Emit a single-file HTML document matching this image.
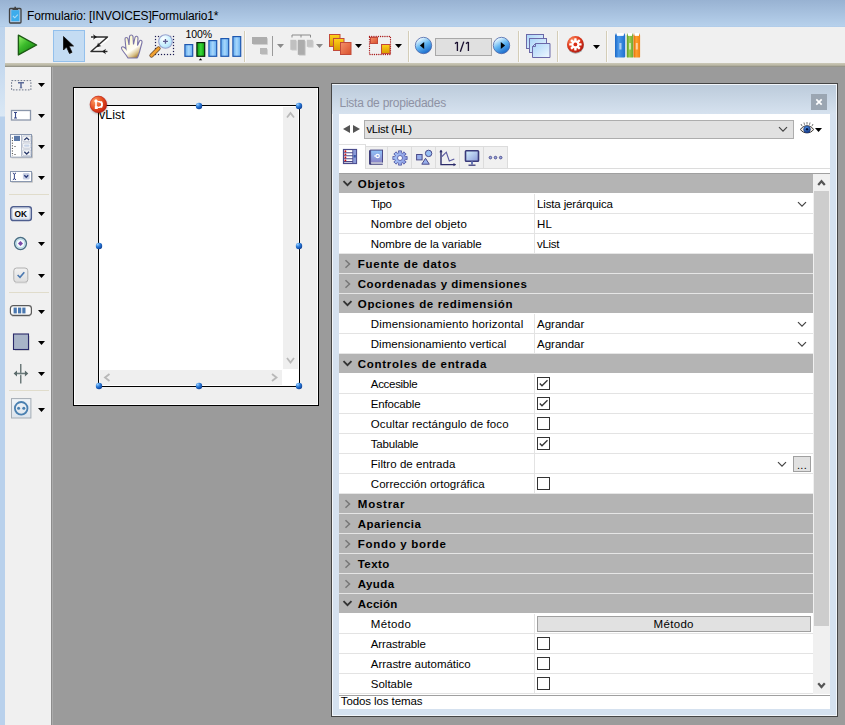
<!DOCTYPE html>
<html><head><meta charset="utf-8"><style>
html,body{margin:0;padding:0;}
body{width:845px;height:725px;overflow:hidden;position:relative;background:#9b9b9b;font-family:"Liberation Sans",sans-serif;}
body>div{position:absolute;}
.t{white-space:nowrap;line-height:20px;height:20px;}
svg{overflow:visible}
</style></head><body>
<div style="left:0px;top:0px;width:845px;height:27px;background:linear-gradient(#98b2d2,#b6d0eb 95%,#afcbe9);"></div>
<svg style="position:absolute;left:8px;top:6px" width="15" height="18" viewBox="0 0 15 18"><rect x="1.5" y="2.5" width="11.5" height="14.5" rx="1" fill="none" stroke="#404040" stroke-width="1.3"/><rect x="3.3" y="4.2" width="8" height="11" fill="#3cacec"/><path d="M4.5 3.3 H10 M7.2 0.8 V3.3" stroke="#404040" stroke-width="1.6"/><path d="M5 10 l1.8 1.8 l3-3.2" stroke="#a8daf6" stroke-width="1.1" fill="none"/></svg>
<div class="t" style="left:27px;top:6.24px;font-size:12px;font-weight:normal;color:#000;letter-spacing:-0.158px;">Formulario: [INVOICES]Formulario1*</div>
<div style="left:5px;top:27px;width:840px;height:36px;background:#f0f0f0;"></div>
<div style="left:5px;top:63px;width:840px;height:4px;background:linear-gradient(#cbc8b8,#bdbaa6 50%,#a8a698 75%,#86867c);"></div>
<div style="left:0px;top:27px;width:5px;height:698px;background:linear-gradient(#bcd3ec 0px,#c4d8ee 36px,#dae8f5 89px,#b9d1ec 90px,#b9d1ec);"></div>
<svg style="position:absolute;left:16px;top:33px" width="23" height="25" viewBox="0 0 23 25"><defs><linearGradient id="gp" x1="0" y1="0" x2="0.8" y2="1"><stop offset="0" stop-color="#9ef86e"/><stop offset="0.45" stop-color="#3cbc2c"/><stop offset="1" stop-color="#127a0e"/></linearGradient></defs><path d="M2.4 2.2 L20.6 12 L2.4 21.9 Z" fill="url(#gp)" stroke="#1c5a14" stroke-width="1.4" stroke-linejoin="round"/></svg>
<div style="left:53px;top:30px;width:32px;height:32px;background:#c4dcf3;box-sizing:border-box;border:1px solid #93c0ec;"></div>
<svg style="position:absolute;left:60px;top:35px" width="16" height="22" viewBox="0 0 16 22"><path d="M4 2 L4 15.5 L7 12.5 L10 19 L12.5 17.8 L9.5 11.5 L14 11.5 Z" fill="#c8c8c8" opacity="0.6"/><path d="M3.5 1.5 L3.5 15 L6.5 12 L9.5 18.5 L12 17.3 L9 11 L13.5 11 Z" fill="#000" stroke="#111" stroke-width="0.8" stroke-linejoin="round"/></svg>
<svg style="position:absolute;left:88px;top:33px" width="23" height="23" viewBox="0 0 23 23"><g stroke="#fff" stroke-width="3" fill="none" opacity="0.9" stroke-linejoin="round"><path d="M3.5 5 H20 L3.5 19 H20"/></g><g stroke="#2e2e2e" stroke-width="1.5" fill="none" stroke-linejoin="round"><path d="M3 4 H19.5 L3 18.5 H19.5"/></g><g fill="#1a1a1a"><path d="M5 1.3 L9 4 L5 6.7 L6.2 4 Z"/><path d="M14 18.5 L18 15.8 L16.8 18.5 L18 21.2 Z"/><path d="M9 14.2 L10 9.6 L11.2 11.9 L13.4 13 Z"/></g></svg>
<svg style="position:absolute;left:120px;top:34px" width="24" height="25" viewBox="0 0 24 25"><defs><linearGradient id="gh" x1="0.25" y1="0.2" x2="0.75" y2="1"><stop offset="0" stop-color="#fbf8d0"/><stop offset="0.55" stop-color="#fffef6"/><stop offset="0.8" stop-color="#d8c088"/><stop offset="1" stop-color="#9a6e20"/></linearGradient></defs><path d="M6 21 C3 17 1 15 1.5 13.5 C2.5 12 4.5 13 6 15 L5 5 C5 3 7.5 3 8 5 L9 11 L9.5 2.5 C10 0.5 12.5 0.5 13 2.5 L13.5 10.5 L15 3.5 C15.5 1.5 18 2 18 4 L17.5 11.5 L19.5 7 C20.5 5.5 22.5 6.5 22 8.5 L20 16 C19 20 18 23 17 24 L8 24 Z" fill="url(#gh)" stroke="#7a74a8" stroke-width="1.1"/></svg>
<svg style="position:absolute;left:149px;top:33px" width="27" height="26" viewBox="0 0 27 26"><rect x="5.9" y="2.9" width="1.2" height="1.2" fill="#1a1a50"/><rect x="5.9" y="20.9" width="1.2" height="1.2" fill="#1a1a50"/><rect x="8.9" y="2.9" width="1.2" height="1.2" fill="#1a1a50"/><rect x="8.9" y="20.9" width="1.2" height="1.2" fill="#1a1a50"/><rect x="11.9" y="2.9" width="1.2" height="1.2" fill="#1a1a50"/><rect x="11.9" y="20.9" width="1.2" height="1.2" fill="#1a1a50"/><rect x="14.9" y="2.9" width="1.2" height="1.2" fill="#1a1a50"/><rect x="14.9" y="20.9" width="1.2" height="1.2" fill="#1a1a50"/><rect x="17.9" y="2.9" width="1.2" height="1.2" fill="#1a1a50"/><rect x="17.9" y="20.9" width="1.2" height="1.2" fill="#1a1a50"/><rect x="20.9" y="2.9" width="1.2" height="1.2" fill="#1a1a50"/><rect x="20.9" y="20.9" width="1.2" height="1.2" fill="#1a1a50"/><rect x="23.9" y="2.9" width="1.2" height="1.2" fill="#1a1a50"/><rect x="23.9" y="20.9" width="1.2" height="1.2" fill="#1a1a50"/><rect x="5.9" y="5.9" width="1.2" height="1.2" fill="#1a1a50"/><rect x="23.9" y="5.9" width="1.2" height="1.2" fill="#1a1a50"/><rect x="5.9" y="8.9" width="1.2" height="1.2" fill="#1a1a50"/><rect x="23.9" y="8.9" width="1.2" height="1.2" fill="#1a1a50"/><rect x="5.9" y="11.9" width="1.2" height="1.2" fill="#1a1a50"/><rect x="23.9" y="11.9" width="1.2" height="1.2" fill="#1a1a50"/><rect x="5.9" y="14.9" width="1.2" height="1.2" fill="#1a1a50"/><rect x="23.9" y="14.9" width="1.2" height="1.2" fill="#1a1a50"/><rect x="5.9" y="17.9" width="1.2" height="1.2" fill="#1a1a50"/><rect x="23.9" y="17.9" width="1.2" height="1.2" fill="#1a1a50"/><path d="M2.5 22.5 L9.5 15.5" stroke="#6a4a2a" stroke-width="4.2" stroke-linecap="round"/><path d="M2.5 22.5 L9.5 15.5" stroke="#f0a030" stroke-width="2.8" stroke-linecap="round"/><defs><radialGradient id="glens" cx="0.35" cy="0.3" r="0.8"><stop offset="0" stop-color="#ffffff"/><stop offset="0.6" stop-color="#c8f0ff"/><stop offset="1" stop-color="#a8d8f4"/></radialGradient></defs><circle cx="16.5" cy="8.5" r="6.8" fill="url(#glens)" stroke="#9aa4d0" stroke-width="1.1"/><path d="M16.45 6 V10.8 M14 8.4 H18.9" stroke="#5a5a90" stroke-width="1.3"/></svg>
<div class="t" style="left:185.5px;top:24.06px;font-size:10.5px;font-weight:normal;color:#000;letter-spacing:-0.051px;">100%</div>
<svg style="position:absolute;left:183.5px;top:44px" width="10" height="13.899999999999999" viewBox="0 0 10 13.899999999999999"><defs><linearGradient id="gb183" x1="0" y1="0" x2="1" y2="0"><stop offset="0" stop-color="#62acf0"/><stop offset="0.5" stop-color="#a8d8fc"/><stop offset="1" stop-color="#62acf0"/></linearGradient></defs><rect x="0.9" y="0.6" width="7.8" height="11.70" fill="url(#gb183)" stroke="#1e58b0" stroke-width="1.2"/></svg>
<svg style="position:absolute;left:195.5px;top:42px" width="10" height="15.899999999999999" viewBox="0 0 10 15.899999999999999"><defs><linearGradient id="gb195" x1="0" y1="0" x2="1" y2="0"><stop offset="0" stop-color="#0a9a0a"/><stop offset="0.5" stop-color="#3ad83a"/><stop offset="1" stop-color="#0a9a0a"/></linearGradient></defs><rect x="0.9" y="0.6" width="7.8" height="13.70" fill="url(#gb195)" stroke="#0a200a" stroke-width="1.2"/></svg>
<svg style="position:absolute;left:207.5px;top:40px" width="10" height="17.9" viewBox="0 0 10 17.9"><defs><linearGradient id="gb207" x1="0" y1="0" x2="1" y2="0"><stop offset="0" stop-color="#62acf0"/><stop offset="0.5" stop-color="#a8d8fc"/><stop offset="1" stop-color="#62acf0"/></linearGradient></defs><rect x="0.9" y="0.6" width="7.8" height="15.70" fill="url(#gb207)" stroke="#1e58b0" stroke-width="1.2"/></svg>
<svg style="position:absolute;left:219.5px;top:38px" width="10" height="19.9" viewBox="0 0 10 19.9"><defs><linearGradient id="gb219" x1="0" y1="0" x2="1" y2="0"><stop offset="0" stop-color="#62acf0"/><stop offset="0.5" stop-color="#a8d8fc"/><stop offset="1" stop-color="#62acf0"/></linearGradient></defs><rect x="0.9" y="0.6" width="7.8" height="17.70" fill="url(#gb219)" stroke="#1e58b0" stroke-width="1.2"/></svg>
<svg style="position:absolute;left:231.5px;top:36px" width="10" height="21.9" viewBox="0 0 10 21.9"><defs><linearGradient id="gb231" x1="0" y1="0" x2="1" y2="0"><stop offset="0" stop-color="#62acf0"/><stop offset="0.5" stop-color="#a8d8fc"/><stop offset="1" stop-color="#62acf0"/></linearGradient></defs><rect x="0.9" y="0.6" width="7.8" height="19.70" fill="url(#gb231)" stroke="#1e58b0" stroke-width="1.2"/></svg>
<svg style="position:absolute;left:197px;top:57px" width="7" height="4" viewBox="0 0 7 4"><path d="M1.8 3.2 L3.5 1.2 L5.2 3.2 Z" fill="#000"/></svg>
<div style="left:244px;top:31px;width:1px;height:31px;background:#d4cdb7;"></div>
<div style="left:245px;top:31px;width:1px;height:31px;background:#fafafa;"></div>
<svg style="position:absolute;left:251px;top:35px" width="20" height="22" viewBox="0 0 20 22"><rect x="2" y="3" width="15" height="7" rx="1" fill="#cfcfcf"/><rect x="1" y="2" width="15" height="7" fill="#adadad"/><rect x="10" y="14" width="7" height="6" rx="1" fill="#d2d2d2"/><rect x="9" y="13" width="7" height="6" fill="#b8b8b8"/></svg>
<div style="left:272px;top:36px;width:1px;height:20px;background:#9a9a9a;"></div>
<svg style="position:absolute;left:277px;top:44px" width="7" height="4" viewBox="0 0 7 4"><path d="M0 0 H7 L3.5 4 Z" fill="#8a8a8a"/></svg>
<svg style="position:absolute;left:289px;top:34px" width="26" height="23" viewBox="0 0 26 23"><path d="M3 3.5 V1 H21.5 V3.5 M12 1 V3.5" stroke="#8a8a8a" stroke-width="1" fill="none"/><rect x="2.3" y="6.8" width="6" height="10" rx="1" fill="#d6d6d6"/><rect x="1.3" y="5.8" width="6" height="10" fill="#c0c0c0"/><rect x="9.8" y="6.8" width="7" height="15" rx="1" fill="#cfcfcf"/><rect x="8.8" y="5.8" width="7" height="15" fill="#acacac"/><rect x="18.8" y="6.8" width="6" height="7" rx="1" fill="#d6d6d6"/><rect x="17.8" y="5.8" width="6" height="7" fill="#c4c4c4"/></svg>
<svg style="position:absolute;left:316px;top:44px" width="7" height="4" viewBox="0 0 7 4"><path d="M0 0 H7 L3.5 4 Z" fill="#8a8a8a"/></svg>
<svg style="position:absolute;left:328px;top:33px" width="25" height="23" viewBox="0 0 25 23"><defs><linearGradient id="gy" x1="0" y1="0" x2="0" y2="1"><stop offset="0" stop-color="#ffd21a"/><stop offset="1" stop-color="#d89a00"/></linearGradient><linearGradient id="go" x1="0" y1="0" x2="1" y2="1"><stop offset="0" stop-color="#f5906a"/><stop offset="1" stop-color="#d8502c"/></linearGradient></defs><rect x="1.5" y="1.5" width="10.5" height="12" fill="url(#gy)" stroke="#c24a3a"/><rect x="5.5" y="5.5" width="10.5" height="12" fill="url(#gy)" stroke="#c24a3a"/><rect x="12.5" y="9.5" width="10.5" height="12" fill="url(#go)" stroke="#c24a3a"/></svg>
<svg style="position:absolute;left:355px;top:44px" width="7" height="4" viewBox="0 0 7 4"><path d="M0 0 H7 L3.5 4 Z" fill="#000"/></svg>
<svg style="position:absolute;left:368px;top:35px" width="25" height="21" viewBox="0 0 25 21"><rect x="1.5" y="1.5" width="21" height="18" fill="none" stroke="#a81818" stroke-width="1.3" stroke-dasharray="0.1 2.1" stroke-linecap="round"/><rect x="2.5" y="2.5" width="7" height="6" fill="url(#go)" stroke="#c24a3a"/><rect x="13.5" y="9.5" width="8.5" height="9" fill="url(#gy)" stroke="#c24a3a"/></svg>
<svg style="position:absolute;left:395px;top:44px" width="7" height="4" viewBox="0 0 7 4"><path d="M0 0 H7 L3.5 4 Z" fill="#000"/></svg>
<div style="left:408px;top:31px;width:1px;height:31px;background:#d4cdb7;"></div>
<div style="left:409px;top:31px;width:1px;height:31px;background:#fafafa;"></div>
<svg style="position:absolute;left:415.4px;top:37.2px" width="17" height="17" viewBox="0 0 17 17"><defs><linearGradient id="gc423" x1="0.2" y1="0.1" x2="0.7" y2="1"><stop offset="0" stop-color="#f0fbff"/><stop offset="0.45" stop-color="#62b6f2"/><stop offset="1" stop-color="#1464c8"/></linearGradient></defs><circle cx="8.5" cy="8.5" r="8.2" fill="url(#gc423)" stroke="#4a64a8" stroke-width="0.8"/><path d="M4.9 8.5 L9.2 5.1 L9.2 11.9 Z" fill="#000"/></svg>
<div style="left:435px;top:38px;width:57px;height:18px;background:#e0e0e0;box-sizing:border-box;border:1px solid #a8a8a8;"></div>
<svg style="position:absolute;left:450px;top:38px" width="25" height="18" viewBox="0 0 25 18"><g stroke="#1a1030" stroke-width="1.35" fill="none"><path d="M7.4 4 V13"/><path d="M4.9 5.6 L7.4 4"/><path d="M13.8 3.6 L10.3 13.8"/><path d="M18.4 4 V13"/><path d="M15.9 5.6 L18.4 4"/></g></svg>
<svg style="position:absolute;left:492.5px;top:37.2px" width="17" height="17" viewBox="0 0 17 17"><defs><linearGradient id="gc501" x1="0.2" y1="0.1" x2="0.7" y2="1"><stop offset="0" stop-color="#f0fbff"/><stop offset="0.45" stop-color="#62b6f2"/><stop offset="1" stop-color="#1464c8"/></linearGradient></defs><circle cx="8.5" cy="8.5" r="8.2" fill="url(#gc501)" stroke="#4a64a8" stroke-width="0.8"/><path d="M12.1 8.5 L7.8 5.1 L7.8 11.9 Z" fill="#000"/></svg>
<div style="left:518px;top:31px;width:1px;height:31px;background:#d4cdb7;"></div>
<div style="left:519px;top:31px;width:1px;height:31px;background:#fafafa;"></div>
<svg style="position:absolute;left:525px;top:33px" width="27" height="26" viewBox="0 0 27 26"><defs><linearGradient id="gw" x1="0" y1="0" x2="1" y2="1"><stop offset="0" stop-color="#a8d4f8"/><stop offset="1" stop-color="#f0f8ff"/></linearGradient></defs><rect x="1.5" y="1.5" width="17" height="14" fill="url(#gw)" stroke="#6b68a8"/><rect x="4.5" y="5.5" width="17" height="14" fill="url(#gw)" stroke="#6b68a8"/><path d="M10.5 10.5 H25 V24.5 H7.5 V13.5 Z" fill="url(#gw)" stroke="#6b68a8"/><path d="M7.5 13.5 H10.5 V10.5" fill="none" stroke="#6b68a8"/></svg>
<div style="left:557px;top:31px;width:1px;height:31px;background:#d4cdb7;"></div>
<div style="left:558px;top:31px;width:1px;height:31px;background:#fafafa;"></div>
<svg style="position:absolute;left:565px;top:34px" width="21" height="22" viewBox="0 0 21 22"><defs><radialGradient id="gr" cx="0.35" cy="0.3" r="0.8"><stop offset="0" stop-color="#ff9a6a"/><stop offset="0.5" stop-color="#e23a1c"/><stop offset="1" stop-color="#a81410"/></radialGradient><filter id="fsg" x="-30%" y="-30%" width="160%" height="160%"><feGaussianBlur stdDeviation="0.7"/></filter></defs><circle cx="10.6" cy="11.3" r="8.4" fill="#000" opacity="0.3" filter="url(#fsg)"/><circle cx="10.4" cy="10.4" r="8.4" fill="url(#gr)"/><g fill="#fff"><circle cx="10.4" cy="10.4" r="3.9"/><g id="tth"><rect x="9.2" y="4.2" width="2.4" height="12.4" rx="0.6"/></g><rect x="9.2" y="4.2" width="2.4" height="12.4" rx="0.6" transform="rotate(45 10.4 10.4)"/><rect x="9.2" y="4.2" width="2.4" height="12.4" rx="0.6" transform="rotate(90 10.4 10.4)"/><rect x="9.2" y="4.2" width="2.4" height="12.4" rx="0.6" transform="rotate(135 10.4 10.4)"/></g><circle cx="10.4" cy="10.4" r="1.9" fill="#d83018"/></svg>
<svg style="position:absolute;left:593px;top:45px" width="7" height="4" viewBox="0 0 7 4"><path d="M0 0 H7 L3.5 4 Z" fill="#000"/></svg>
<div style="left:606px;top:31px;width:1px;height:31px;background:#d4cdb7;"></div>
<div style="left:607px;top:31px;width:1px;height:31px;background:#fafafa;"></div>
<svg style="position:absolute;left:614px;top:32px" width="28" height="27" viewBox="0 0 28 27"><defs><linearGradient id="bkb" x1="0" x2="1"><stop offset="0" stop-color="#1a68c8"/><stop offset="0.35" stop-color="#4a98e8"/><stop offset="1" stop-color="#1e70d0"/></linearGradient><linearGradient id="bkg" x1="0" x2="1"><stop offset="0" stop-color="#5a9a20"/><stop offset="0.4" stop-color="#9ccc50"/><stop offset="1" stop-color="#6aa830"/></linearGradient><linearGradient id="bko" x1="0" x2="1"><stop offset="0" stop-color="#e06a00"/><stop offset="0.4" stop-color="#ffa030"/><stop offset="1" stop-color="#f08010"/></linearGradient></defs><path d="M1 3.5 L2 1 L3 3.5 H9.5 L10.5 1 L11.2 3.5 V24.5 C11.2 25.3 10.5 25.5 9.5 25.5 H2.5 C1.5 25.5 1 25.3 1 24.5 Z" fill="url(#bkb)"/><rect x="3" y="1" width="6.5" height="2.8" fill="#fff"/><path d="M12.8 3.5 L13.3 1 L14 3.5 H18 L18.7 1 L19.2 3.5 V25 C19.2 25.4 18.8 25.5 18 25.5 H14 C13.2 25.5 12.8 25.4 12.8 25 Z" fill="url(#bkg)"/><rect x="14" y="1" width="4" height="2.8" fill="#fff"/><path d="M19.5 3.5 L20 1 L20.7 3.5 H25 L25.6 1 L26.1 3.5 V25 C26.1 25.4 25.7 25.5 25 25.5 H20.5 C19.8 25.5 19.5 25.4 19.5 25 Z" fill="url(#bko)"/><rect x="20.7" y="1" width="4.3" height="2.8" fill="#fff"/><g fill="#fff" opacity="0.55"><rect x="5.3" y="11" width="2.2" height="6.5"/><rect x="15" y="11" width="2" height="6.5"/><rect x="21.8" y="11" width="2" height="6.5"/></g></svg>
<div style="left:5px;top:67px;width:46px;height:658px;background:#f0f0f0;"></div>
<div style="left:51px;top:67px;width:1px;height:658px;background:#8c8c8c;"></div>
<div style="left:52px;top:67px;width:1px;height:658px;background:#ababab;"></div>
<svg style="position:absolute;left:10px;top:79px" width="23" height="13" viewBox="0 0 23 13"><rect x="1.6" y="1.6" width="19.3" height="9.3" fill="none" stroke="#6a7488" stroke-width="1" stroke-dasharray="1.6 1.4"/><path d="M8 3.8 H14 M11 3.8 V8.8" stroke="#5a6a98" stroke-width="1.5" fill="none"/><path d="M9.8 8.8 H12.2" stroke="#5a6a98" stroke-width="1"/></svg>
<svg style="position:absolute;left:38px;top:83px" width="7" height="4" viewBox="0 0 7 4"><path d="M0 0 H7 L3.5 4 Z" fill="#000"/></svg>
<svg style="position:absolute;left:10px;top:109px" width="22" height="13" viewBox="0 0 22 13"><rect x="1.5" y="1.5" width="19" height="9.5" fill="#fff" stroke="#8a96aa" stroke-width="1.3"/><path d="M4 3.5 H7 M5.5 3.5 V9 M4 9 H7" stroke="#3a4a8a" stroke-width="1.1" fill="none"/></svg>
<svg style="position:absolute;left:38px;top:114px" width="7" height="4" viewBox="0 0 7 4"><path d="M0 0 H7 L3.5 4 Z" fill="#000"/></svg>
<svg style="position:absolute;left:10px;top:133px" width="24" height="26" viewBox="0 0 24 26"><path d="M22.5 2.5 V24.8 H1.5" stroke="#c4c4c4" fill="none"/><rect x="0.5" y="1.5" width="21" height="22.5" fill="#eceef2" stroke="#8a98b0"/><rect x="1" y="2" width="10.5" height="21.5" fill="#fff"/><path d="M11.5 2 V23.5" stroke="#b4bccc"/><path d="M2.4 4.5 V23" stroke="#333" stroke-dasharray="1 1.6" stroke-width="1"/><rect x="4.5" y="13" width="1" height="1" fill="#333"/><rect x="4.5" y="21" width="1" height="1" fill="#333"/><rect x="4" y="2.8" width="6" height="5.2" fill="#5a78a8"/><g fill="#f6f7f9" stroke="#c4cad6" stroke-width="0.9"><rect x="12.6" y="3" width="8.2" height="5.6" rx="1.5"/><rect x="12.6" y="10" width="8.2" height="5.2" rx="1.5"/><rect x="12.6" y="16.8" width="8.2" height="5.8" rx="1.5"/></g><rect x="14" y="11.6" width="5.5" height="2.2" rx="1" fill="#c8d4e8"/><path d="M14.3 7 L16.7 4.8 L19.1 7 M14.3 18.8 L16.7 21 L19.1 18.8" stroke="#2a3a6a" stroke-width="1.3" fill="none"/></svg>
<svg style="position:absolute;left:38px;top:145px" width="7" height="4" viewBox="0 0 7 4"><path d="M0 0 H7 L3.5 4 Z" fill="#000"/></svg>
<svg style="position:absolute;left:10px;top:170px" width="24" height="14" viewBox="0 0 24 14"><path d="M22.5 2.5 V12.3 H1.5" stroke="#c4c4c4" fill="none"/><rect x="0.5" y="1.5" width="21" height="10" fill="#fff" stroke="#8a98b0"/><path d="M2.8 3 Q4.4 3.4 4.4 4.8 V8 Q4.4 9.4 2.8 9.8 M6 3 Q4.4 3.4 4.4 4.8 M6 9.8 Q4.4 9.4 4.4 8" stroke="#3a4a8a" stroke-width="1" fill="none"/><rect x="12.9" y="3" width="6.7" height="6.4" rx="1.2" fill="#c8d0e4"/><path d="M14.3 5.3 L16.25 7.3 L18.2 5.3" stroke="#2a3a7a" stroke-width="1.4" fill="none"/></svg>
<svg style="position:absolute;left:38px;top:176px" width="7" height="4" viewBox="0 0 7 4"><path d="M0 0 H7 L3.5 4 Z" fill="#000"/></svg>
<div style="left:9px;top:194px;width:40px;height:1px;background:#e0dccb;"></div>
<svg style="position:absolute;left:9px;top:205px" width="25" height="18" viewBox="0 0 25 18"><defs><linearGradient id="gok" x1="0" y1="0" x2="0" y2="1"><stop offset="0" stop-color="#ffffff"/><stop offset="1" stop-color="#e4e8f0"/></linearGradient></defs><rect x="1.8" y="1.8" width="20.5" height="13.8" rx="2.5" fill="url(#gok)" stroke="#4e5e8e" stroke-width="1.5"/><rect x="3.2" y="3.2" width="17.7" height="11" rx="1.2" fill="none" stroke="#b8c4dc" stroke-width="0.8"/><text x="11.8" y="11.6" font-family="Liberation Sans" font-weight="bold" font-size="8.3" text-anchor="middle" fill="#000">OK</text></svg>
<svg style="position:absolute;left:38px;top:212px" width="7" height="4" viewBox="0 0 7 4"><path d="M0 0 H7 L3.5 4 Z" fill="#000"/></svg>
<svg style="position:absolute;left:13px;top:236px" width="16" height="16" viewBox="0 0 16 16"><circle cx="7.5" cy="7.5" r="5.9" fill="#f4fafc" stroke="#4a6e84" stroke-width="1.5"/><circle cx="7.5" cy="7.5" r="4.3" fill="none" stroke="#b8dce8" stroke-width="1.3"/><path d="M7.5 5 L10 7.5 L7.5 10 L5 7.5 Z" fill="#7a4aa8"/></svg>
<svg style="position:absolute;left:38px;top:242px" width="7" height="4" viewBox="0 0 7 4"><path d="M0 0 H7 L3.5 4 Z" fill="#000"/></svg>
<svg style="position:absolute;left:12px;top:266px" width="18" height="18" viewBox="0 0 18 18"><defs><linearGradient id="gck" x1="0" y1="0" x2="0" y2="1"><stop offset="0" stop-color="#f2f2f2"/><stop offset="1" stop-color="#dedede"/></linearGradient></defs><rect x="1.8" y="2" width="14" height="14.3" rx="2.8" fill="url(#gck)" stroke="#b0b0b0" stroke-width="1"/><path d="M3 16.8 H15" stroke="#d0d0d0"/><path d="M5.6 9 L8 11.3 L12.3 6.3" stroke="#4a78b0" stroke-width="1.6" fill="none"/></svg>
<svg style="position:absolute;left:38px;top:274px" width="7" height="4" viewBox="0 0 7 4"><path d="M0 0 H7 L3.5 4 Z" fill="#000"/></svg>
<div style="left:9px;top:292px;width:40px;height:1px;background:#e0dccb;"></div>
<svg style="position:absolute;left:9px;top:304px" width="25" height="14" viewBox="0 0 25 14"><path d="M3 12.3 H21" stroke="#c8c8c8" stroke-width="1"/><rect x="1.4" y="1.6" width="21" height="9.8" rx="2.8" fill="#fbfbfb" stroke="#5a5a5a" stroke-width="1.2"/><rect x="4.6" y="3.6" width="3.2" height="5.8" fill="#4a78b0"/><rect x="9" y="3.6" width="3.2" height="5.8" fill="#4a78b0"/><rect x="13.3" y="3.6" width="3.2" height="5.8" fill="#4a78b0"/></svg>
<svg style="position:absolute;left:38px;top:310px" width="7" height="4" viewBox="0 0 7 4"><path d="M0 0 H7 L3.5 4 Z" fill="#000"/></svg>
<svg style="position:absolute;left:12px;top:333px" width="19" height="19" viewBox="0 0 19 19"><path d="M3 17.4 H17.2 V3" stroke="#cfcfcf" stroke-width="1" fill="none"/><rect x="1.5" y="1" width="15" height="15.5" fill="#a8b4c8" stroke="#2a2a6a" stroke-width="1.1"/></svg>
<svg style="position:absolute;left:38px;top:341px" width="7" height="4" viewBox="0 0 7 4"><path d="M0 0 H7 L3.5 4 Z" fill="#000"/></svg>
<svg style="position:absolute;left:12px;top:363px" width="18" height="22" viewBox="0 0 18 22"><path d="M9.3 1 V20.5" stroke="#fff" stroke-width="1.5" opacity="0.8"/><path d="M8.8 1 V20.5" stroke="#556464" stroke-width="1.3"/><path d="M3 11 H14.5" stroke="#fff" stroke-width="2.2" opacity="0.7"/><path d="M3.2 10.5 H14.2" stroke="#6a7a7a" stroke-width="1.6"/><path d="M1.6 10.5 L5 7.6 V13.4 Z M16.3 10.5 L12.9 7.6 V13.4 Z" fill="#5a6a6a"/></svg>
<svg style="position:absolute;left:38px;top:372px" width="7" height="4" viewBox="0 0 7 4"><path d="M0 0 H7 L3.5 4 Z" fill="#000"/></svg>
<div style="left:9px;top:390px;width:40px;height:1px;background:#e0dccb;"></div>
<svg style="position:absolute;left:11px;top:398px" width="21" height="21" viewBox="0 0 21 21"><defs><linearGradient id="gpl" x1="0" y1="0" x2="0" y2="1"><stop offset="0" stop-color="#f0f4f8"/><stop offset="1" stop-color="#dce4ec"/></linearGradient></defs><rect x="0.5" y="0.6" width="19.4" height="19.4" fill="url(#gpl)" stroke="#a4acb4"/><circle cx="10.2" cy="10.3" r="6.3" fill="none" stroke="#4a80b0" stroke-width="1.8"/><circle cx="7.6" cy="10.3" r="1.5" fill="#4a80b0"/><circle cx="12.8" cy="10.3" r="1.5" fill="#4a80b0"/></svg>
<svg style="position:absolute;left:38px;top:408px" width="7" height="4" viewBox="0 0 7 4"><path d="M0 0 H7 L3.5 4 Z" fill="#000"/></svg>
<div style="left:73px;top:87px;width:246px;height:319px;background:#efefef;box-sizing:border-box;border:1px solid #000;"></div>
<div style="left:74px;top:88px;width:1px;height:316px;background:#fff;"></div>
<div style="left:74px;top:404px;width:244px;height:1px;background:#fff;"></div>
<div style="left:317px;top:88px;width:1px;height:316px;background:#fff;"></div>
<div style="left:98px;top:105px;width:202px;height:282px;background:#fff;box-sizing:border-box;border:1px solid #000;"></div>
<div style="left:283px;top:107px;width:15px;height:262px;background:#efefef;"></div>
<div style="left:100px;top:370px;width:182px;height:15px;background:#efefef;"></div>
<svg style="position:absolute;left:286px;top:111px" width="9" height="8" viewBox="0 0 9 8"><path d="M1 6.5 L4.5 2 L8 6.5" stroke="#b8b8b8" stroke-width="1.8" fill="none"/></svg>
<svg style="position:absolute;left:286px;top:356px" width="9" height="9" viewBox="0 0 9 9"><path d="M1 2 L4.5 6.5 L8 2" stroke="#b8b8b8" stroke-width="1.8" fill="none"/></svg>
<svg style="position:absolute;left:103px;top:373px" width="9" height="9" viewBox="0 0 9 9"><path d="M6.5 1 L2 4.5 L6.5 8" stroke="#b8b8b8" stroke-width="1.8" fill="none"/></svg>
<svg style="position:absolute;left:270px;top:373px" width="9" height="9" viewBox="0 0 9 9"><path d="M2 1 L6.5 4.5 L2 8" stroke="#b8b8b8" stroke-width="1.8" fill="none"/></svg>
<div class="t" style="left:99px;top:104.97px;font-size:12.5px;font-weight:normal;color:#000;letter-spacing:0px;">vList</div>
<svg style="position:absolute;left:194.6px;top:101.6px" width="8" height="8" viewBox="0 0 8 8"><defs><radialGradient id="gdh" cx="0.3" cy="0.25" r="0.85"><stop offset="0" stop-color="#9ad0ff"/><stop offset="0.45" stop-color="#2a7ad8"/><stop offset="1" stop-color="#0a3a90"/></radialGradient></defs><circle cx="4" cy="4" r="3.2" fill="url(#gdh)"/></svg>
<svg style="position:absolute;left:294.6px;top:101.6px" width="8" height="8" viewBox="0 0 8 8"><defs><radialGradient id="gdh" cx="0.3" cy="0.25" r="0.85"><stop offset="0" stop-color="#9ad0ff"/><stop offset="0.45" stop-color="#2a7ad8"/><stop offset="1" stop-color="#0a3a90"/></radialGradient></defs><circle cx="4" cy="4" r="3.2" fill="url(#gdh)"/></svg>
<svg style="position:absolute;left:94.8px;top:241.6px" width="8" height="8" viewBox="0 0 8 8"><defs><radialGradient id="gdh" cx="0.3" cy="0.25" r="0.85"><stop offset="0" stop-color="#9ad0ff"/><stop offset="0.45" stop-color="#2a7ad8"/><stop offset="1" stop-color="#0a3a90"/></radialGradient></defs><circle cx="4" cy="4" r="3.2" fill="url(#gdh)"/></svg>
<svg style="position:absolute;left:294.6px;top:241.6px" width="8" height="8" viewBox="0 0 8 8"><defs><radialGradient id="gdh" cx="0.3" cy="0.25" r="0.85"><stop offset="0" stop-color="#9ad0ff"/><stop offset="0.45" stop-color="#2a7ad8"/><stop offset="1" stop-color="#0a3a90"/></radialGradient></defs><circle cx="4" cy="4" r="3.2" fill="url(#gdh)"/></svg>
<svg style="position:absolute;left:94.8px;top:382.2px" width="8" height="8" viewBox="0 0 8 8"><defs><radialGradient id="gdh" cx="0.3" cy="0.25" r="0.85"><stop offset="0" stop-color="#9ad0ff"/><stop offset="0.45" stop-color="#2a7ad8"/><stop offset="1" stop-color="#0a3a90"/></radialGradient></defs><circle cx="4" cy="4" r="3.2" fill="url(#gdh)"/></svg>
<svg style="position:absolute;left:194.6px;top:382.2px" width="8" height="8" viewBox="0 0 8 8"><defs><radialGradient id="gdh" cx="0.3" cy="0.25" r="0.85"><stop offset="0" stop-color="#9ad0ff"/><stop offset="0.45" stop-color="#2a7ad8"/><stop offset="1" stop-color="#0a3a90"/></radialGradient></defs><circle cx="4" cy="4" r="3.2" fill="url(#gdh)"/></svg>
<svg style="position:absolute;left:294.6px;top:382.2px" width="8" height="8" viewBox="0 0 8 8"><defs><radialGradient id="gdh" cx="0.3" cy="0.25" r="0.85"><stop offset="0" stop-color="#9ad0ff"/><stop offset="0.45" stop-color="#2a7ad8"/><stop offset="1" stop-color="#0a3a90"/></radialGradient></defs><circle cx="4" cy="4" r="3.2" fill="url(#gdh)"/></svg>
<svg style="position:absolute;left:88px;top:94px" width="21" height="21" viewBox="0 0 21 21"><defs><radialGradient id="gro" cx="0.3" cy="0.3" r="0.85"><stop offset="0" stop-color="#ff9a60"/><stop offset="0.55" stop-color="#e24a1e"/><stop offset="1" stop-color="#b81a10"/></radialGradient><filter id="fsh" x="-30%" y="-30%" width="160%" height="160%"><feGaussianBlur stdDeviation="0.9"/></filter></defs><circle cx="10.8" cy="11.6" r="8.4" fill="#000" opacity="0.3" filter="url(#fsh)"/><circle cx="10.4" cy="10.4" r="8.3" fill="url(#gro)" stroke="#c01810" stroke-width="0.6"/><g fill="#fff"><path d="M8 5 L10 7 L8 9 L6 7 Z"/><rect x="7.2" y="7" width="1.6" height="6"/><rect x="6.8" y="12.2" width="3" height="2.8"/><path d="M11.2 7.2 H14.2 V8.6 H14.9 V12.4 H14.2 V13.8 H11.2 V12.4 A1.9 1.9 0 0 0 11.2 8.6 Z"/></g><path d="M9.5 7.6 H12 M9.5 13.4 H12" stroke="#fff" stroke-width="1.1"/></svg>
<div style="left:331px;top:83px;width:507px;height:634px;background:#d5e1ef;box-sizing:border-box;border:1px solid #454545;box-shadow:inset 0 0 0 1px #f2f6fb;"></div>
<div style="left:332px;top:85px;width:504px;height:29px;background:linear-gradient(#bccbdb,#d6e2ef);"></div>
<div class="t" style="left:339.5px;top:92.84px;font-size:12px;font-weight:normal;color:#8e92a4;letter-spacing:-0.248px;">Lista de propiedades</div>
<div style="left:811px;top:94px;width:16px;height:16px;background:#9ba6b2;"></div>
<svg style="position:absolute;left:811px;top:94px" width="16" height="16" viewBox="0 0 16 16"><path d="M5.3 5.3 L10.7 10.7 M10.7 5.3 L5.3 10.7" stroke="#fff" stroke-width="1.7"/></svg>
<div style="left:339px;top:114px;width:491px;height:595px;background:#fff;"></div>
<svg style="position:absolute;left:342px;top:124px" width="20" height="11" viewBox="0 0 20 11"><path d="M8 1 L1 5 L8 9 Z M11 1 L18 5 L11 9 Z" fill="#555"/></svg>
<div style="left:364px;top:120px;width:430px;height:19px;background:#e1e1e1;box-sizing:border-box;border:1px solid #adadad;"></div>
<div class="t" style="left:366.5px;top:118.98px;font-size:11.3px;font-weight:normal;color:#000;letter-spacing:-0.3px;">vList (HL)</div>
<svg style="position:absolute;left:778px;top:126px" width="10" height="7" viewBox="0 0 10 7"><path d="M1 1.2 L5 5.2 L9 1.2" stroke="#444" stroke-width="1.2" fill="none"/></svg>
<svg style="position:absolute;left:799px;top:121px" width="25" height="16" viewBox="0 0 25 16"><defs><radialGradient id="gey" cx="0.45" cy="0.4" r="0.6"><stop offset="0" stop-color="#5aa0f0"/><stop offset="1" stop-color="#0a2a78"/></radialGradient></defs><path d="M1.5 8.5 C4 3.5 12 3.5 14.5 8.5 C12 13 4 13 1.5 8.5 Z" fill="#efe6dc" stroke="#3a3a3a" stroke-width="1"/><circle cx="8" cy="8.3" r="3.6" fill="url(#gey)"/><circle cx="8" cy="8.3" r="1.2" fill="#001040"/><path d="M3 5 L2 3 M5.5 3.8 L5 1.5 M8 3.5 V1 M10.5 3.8 L11 1.5 M13 5 L14 3" stroke="#555" stroke-width="0.8"/><path d="M16 7 H23 L19.5 11 Z" fill="#000"/></svg>
<div style="left:366px;top:146px;width:142px;height:23px;background:#f0f0f0;box-sizing:border-box;border:1px solid #dcdcdc;border-left:none;"></div>
<div style="left:387px;top:147px;width:1px;height:21px;background:#dcdcdc;"></div>
<div style="left:411px;top:147px;width:1px;height:21px;background:#dcdcdc;"></div>
<div style="left:435px;top:147px;width:1px;height:21px;background:#dcdcdc;"></div>
<div style="left:459px;top:147px;width:1px;height:21px;background:#dcdcdc;"></div>
<div style="left:483px;top:147px;width:1px;height:21px;background:#dcdcdc;"></div>
<div style="left:339px;top:144px;width:27px;height:25px;background:#fff;box-sizing:border-box;border-top:1px solid #e0e0e0;border-right:1px solid #dcdcdc;"></div>
<div style="left:508px;top:168px;width:322px;height:1px;background:#dcdcdc;"></div>
<svg style="position:absolute;left:342px;top:148px" width="16" height="17" viewBox="0 0 16 17"><rect x="1.5" y="1.5" width="13" height="14" fill="#fff" stroke="#4a4a8a" stroke-width="1.2"/><g stroke="#4a4a8a" stroke-width="1.1"><path d="M1.5 4.8 H11 M1.5 7.8 H11 M1.5 10.8 H11 M1.5 13.6 H11"/></g><rect x="10.8" y="1.5" width="3.8" height="14" fill="#8a9ad8" stroke="#4a4a8a" stroke-width="0.8"/><rect x="11.6" y="7" width="2.2" height="2.5" fill="#3a5aa8"/><g fill="#d01010"><circle cx="3.4" cy="3.3" r="0.95"/><circle cx="3.4" cy="6.4" r="0.95"/><circle cx="3.4" cy="9.5" r="0.95"/><circle cx="3.4" cy="12.5" r="0.95"/></g></svg>
<svg style="position:absolute;left:368px;top:149px" width="16" height="17" viewBox="0 0 16 17"><defs><linearGradient id="gbk" x1="0" y1="0" x2="0" y2="1"><stop offset="0" stop-color="#90c4fa"/><stop offset="1" stop-color="#8a84c8"/></linearGradient></defs><rect x="1" y="1.3" width="2.6" height="14" fill="#3e3e7c"/><rect x="2.6" y="1.1" width="11.9" height="12.4" fill="url(#gbk)" stroke="#4a4a88" stroke-width="1"/><rect x="3" y="13.4" width="11.6" height="1.4" fill="#fff"/><path d="M1.6 15.2 H14.8" stroke="#3e3e7c" stroke-width="1.1"/><circle cx="9.6" cy="7" r="1.7" fill="none" stroke="#fff" stroke-width="1.2"/><path d="M6 7 H8" stroke="#fff" stroke-width="1"/></svg>
<svg style="position:absolute;left:392px;top:150px" width="16" height="16" viewBox="0 0 16 16"><defs><linearGradient id="ggr" x1="0" y1="0" x2="0" y2="1"><stop offset="0" stop-color="#a8c8fa"/><stop offset="1" stop-color="#8a98e0"/></linearGradient></defs><g transform="rotate(-90 8 8)"><path d="M15.11 6.36 L15.11 9.64 L13.25 9.26 L12.60 10.82 L14.19 11.87 L11.87 14.19 L10.82 12.60 L9.26 13.25 L9.64 15.11 L6.36 15.11 L6.74 13.25 L5.18 12.60 L4.13 14.19 L1.81 11.87 L3.40 10.82 L2.75 9.26 L0.89 9.64 L0.89 6.36 L2.75 6.74 L3.40 5.18 L1.81 4.13 L4.13 1.81 L5.18 3.40 L6.74 2.75 L6.36 0.89 L9.64 0.89 L9.26 2.75 L10.82 3.40 L11.87 1.81 L14.19 4.13 L12.60 5.18 L13.25 6.74 Z" fill="url(#ggr)" stroke="#6068b0" stroke-width="1" stroke-linejoin="round"/></g><circle cx="8" cy="8" r="2.5" fill="#fff" stroke="#6068b0" stroke-width="1"/></svg>
<svg style="position:absolute;left:415px;top:149px" width="18" height="17" viewBox="0 0 18 17"><rect x="1.6" y="5.5" width="5.5" height="5.4" fill="#98b0ec" stroke="#4a4a8a" stroke-width="1"/><circle cx="13.6" cy="4.4" r="3.2" fill="#98c0f4" stroke="#4a4a8a" stroke-width="1"/><path d="M6.8 15.2 L10.5 9.3 L14.3 15.2 Z" fill="#98b0ec" stroke="#4a4a8a" stroke-width="1" stroke-linejoin="round"/></svg>
<svg style="position:absolute;left:439px;top:149px" width="18" height="18" viewBox="0 0 18 18"><path d="M2 1.5 V15.6 H16.5" stroke="#2a2a6a" stroke-width="1.4" fill="none"/><path d="M0.3 3.3 L2 0.8 L3.7 3.3 Z M14.5 13.9 L17 15.6 L14.5 17.3 Z" fill="#2a2a6a"/><path d="M3 7.5 L7.3 3.2 L10.3 12 L15.3 10" stroke="#5a5aa0" stroke-width="1.1" fill="none"/></svg>
<svg style="position:absolute;left:463px;top:149px" width="18" height="18" viewBox="0 0 18 18"><defs><linearGradient id="gmon" x1="0" y1="0" x2="1" y2="1"><stop offset="0" stop-color="#d8f4ff"/><stop offset="1" stop-color="#8a98d8"/></linearGradient></defs><rect x="2.5" y="1.8" width="13" height="10.5" rx="0.8" fill="url(#gmon)" stroke="#3a3a7a" stroke-width="1.6"/><path d="M8 12.5 H10 V15.5 H8 Z" fill="#6a7ab8"/><path d="M5.5 16.2 H12.5" stroke="#3a3a7a" stroke-width="1.3"/></svg>
<svg style="position:absolute;left:487px;top:154px" width="16" height="7" viewBox="0 0 16 7"><g fill="#9aa8e0" stroke="#4a4a8a" stroke-width="0.9"><circle cx="3.4" cy="3.6" r="1.3"/><circle cx="8.5" cy="3.6" r="1.3"/><circle cx="13.7" cy="3.6" r="1.3"/></g></svg>
<div style="left:339px;top:173px;width:491px;height:1px;background:#a0a0a0;"></div>
<div style="left:813px;top:174px;width:17px;height:520px;background:#f0f0f0;"></div>
<div style="left:814px;top:191px;width:15px;height:435px;background:#cdcdcd;"></div>
<svg style="position:absolute;left:816px;top:178px" width="11" height="9" viewBox="0 0 11 9"><path d="M2.2 7 L5.5 3.2 L8.8 7" stroke="#555" stroke-width="2.2" fill="none"/></svg>
<svg style="position:absolute;left:816px;top:681px" width="11" height="9" viewBox="0 0 11 9"><path d="M2.2 2.2 L5.5 6 L8.8 2.2" stroke="#555" stroke-width="2.2" fill="none"/></svg>
<div style="left:339px;top:174px;width:474px;height:19px;background:#b4b4b4;"></div>
<svg style="position:absolute;left:342px;top:180px" width="11" height="7" viewBox="0 0 11 7"><path d="M1.5 1.2 L5.5 5.2 L9.5 1.2" stroke="#333" stroke-width="1.8" fill="none"/></svg>
<div class="t" style="left:357.8px;top:173.72px;font-size:11.5px;font-weight:bold;color:#000;letter-spacing:0.699px;">Objetos</div>
<div style="left:534px;top:194px;width:1px;height:19px;background:#e3e3e3;"></div>
<div class="t" style="left:370.8px;top:194.02px;font-size:11.5px;font-weight:normal;color:#000;letter-spacing:-0.245px;">Tipo</div>
<div class="t" style="left:537px;top:194.02px;font-size:11.5px;font-weight:normal;color:#000;letter-spacing:-0.133px;">Lista jerárquica</div>
<svg style="position:absolute;left:797px;top:201px" width="11" height="7" viewBox="0 0 11 7"><path d="M1 1.2 L5 5.2 L9 1.2" stroke="#444" stroke-width="1.2" fill="none"/></svg>
<div style="left:339px;top:213px;width:474px;height:1px;background:#e3e3e3;"></div>
<div style="left:534px;top:214px;width:1px;height:19px;background:#e3e3e3;"></div>
<div class="t" style="left:370.8px;top:214.02px;font-size:11.5px;font-weight:normal;color:#000;letter-spacing:0.126px;">Nombre del objeto</div>
<div class="t" style="left:537px;top:214.02px;font-size:11.5px;font-weight:normal;color:#000;letter-spacing:0.12px;">HL</div>
<div style="left:339px;top:233px;width:474px;height:1px;background:#e3e3e3;"></div>
<div style="left:534px;top:234px;width:1px;height:19px;background:#e3e3e3;"></div>
<div class="t" style="left:370.8px;top:234.02px;font-size:11.5px;font-weight:normal;color:#000;letter-spacing:-0.085px;">Nombre de la variable</div>
<div class="t" style="left:537px;top:234.02px;font-size:11.5px;font-weight:normal;color:#000;letter-spacing:-0.3px;">vList</div>
<div style="left:339px;top:253px;width:474px;height:1px;background:#e6e6e6;"></div>
<div style="left:339px;top:254px;width:474px;height:19px;background:#b4b4b4;"></div>
<svg style="position:absolute;left:344px;top:259px" width="8" height="10" viewBox="0 0 8 10"><path d="M1.5 1.2 L5.5 5 L1.5 8.8" stroke="#777" stroke-width="1.5" fill="none"/></svg>
<div class="t" style="left:357.8px;top:253.72px;font-size:11.5px;font-weight:bold;color:#000;letter-spacing:0.737px;">Fuente de datos</div>
<div style="left:339px;top:273px;width:474px;height:1px;background:#e6e6e6;"></div>
<div style="left:339px;top:274px;width:474px;height:19px;background:#b4b4b4;"></div>
<svg style="position:absolute;left:344px;top:279px" width="8" height="10" viewBox="0 0 8 10"><path d="M1.5 1.2 L5.5 5 L1.5 8.8" stroke="#777" stroke-width="1.5" fill="none"/></svg>
<div class="t" style="left:357.8px;top:273.72px;font-size:11.5px;font-weight:bold;color:#000;letter-spacing:0.518px;">Coordenadas y dimensiones</div>
<div style="left:339px;top:293px;width:474px;height:1px;background:#e6e6e6;"></div>
<div style="left:339px;top:294px;width:474px;height:19px;background:#b4b4b4;"></div>
<svg style="position:absolute;left:342px;top:300px" width="11" height="7" viewBox="0 0 11 7"><path d="M1.5 1.2 L5.5 5.2 L9.5 1.2" stroke="#333" stroke-width="1.8" fill="none"/></svg>
<div class="t" style="left:357.8px;top:293.72px;font-size:11.5px;font-weight:bold;color:#000;letter-spacing:0.641px;">Opciones de redimensión</div>
<div style="left:534px;top:314px;width:1px;height:19px;background:#e3e3e3;"></div>
<div class="t" style="left:370.8px;top:314.02px;font-size:11.5px;font-weight:normal;color:#000;letter-spacing:0.158px;">Dimensionamiento horizontal</div>
<div class="t" style="left:537px;top:314.02px;font-size:11.5px;font-weight:normal;color:#000;letter-spacing:-0.003px;">Agrandar</div>
<svg style="position:absolute;left:797px;top:321px" width="11" height="7" viewBox="0 0 11 7"><path d="M1 1.2 L5 5.2 L9 1.2" stroke="#444" stroke-width="1.2" fill="none"/></svg>
<div style="left:339px;top:333px;width:474px;height:1px;background:#e3e3e3;"></div>
<div style="left:534px;top:334px;width:1px;height:19px;background:#e3e3e3;"></div>
<div class="t" style="left:370.8px;top:334.02px;font-size:11.5px;font-weight:normal;color:#000;letter-spacing:0.022px;">Dimensionamiento vertical</div>
<div class="t" style="left:537px;top:334.02px;font-size:11.5px;font-weight:normal;color:#000;letter-spacing:-0.003px;">Agrandar</div>
<svg style="position:absolute;left:797px;top:341px" width="11" height="7" viewBox="0 0 11 7"><path d="M1 1.2 L5 5.2 L9 1.2" stroke="#444" stroke-width="1.2" fill="none"/></svg>
<div style="left:339px;top:353px;width:474px;height:1px;background:#e6e6e6;"></div>
<div style="left:339px;top:354px;width:474px;height:19px;background:#b4b4b4;"></div>
<svg style="position:absolute;left:342px;top:360px" width="11" height="7" viewBox="0 0 11 7"><path d="M1.5 1.2 L5.5 5.2 L9.5 1.2" stroke="#333" stroke-width="1.8" fill="none"/></svg>
<div class="t" style="left:357.8px;top:353.72px;font-size:11.5px;font-weight:bold;color:#000;letter-spacing:0.711px;">Controles de entrada</div>
<div style="left:534px;top:374px;width:1px;height:19px;background:#e3e3e3;"></div>
<div class="t" style="left:370.8px;top:374.02px;font-size:11.5px;font-weight:normal;color:#000;letter-spacing:-0.3px;">Accesible</div>
<div style="left:537px;top:377px;width:13px;height:13px;background:#fff;box-sizing:border-box;border:1.5px solid #333;"></div>
<svg style="position:absolute;left:537px;top:377px" width="13" height="13" viewBox="0 0 13 13"><path d="M2.8 6.5 L5 8.8 L10.5 3.3" stroke="#333" stroke-width="1.3" fill="none"/></svg>
<div style="left:339px;top:393px;width:474px;height:1px;background:#e3e3e3;"></div>
<div style="left:534px;top:394px;width:1px;height:19px;background:#e3e3e3;"></div>
<div class="t" style="left:370.8px;top:394.02px;font-size:11.5px;font-weight:normal;color:#000;letter-spacing:-0.168px;">Enfocable</div>
<div style="left:537px;top:397px;width:13px;height:13px;background:#fff;box-sizing:border-box;border:1.5px solid #333;"></div>
<svg style="position:absolute;left:537px;top:397px" width="13" height="13" viewBox="0 0 13 13"><path d="M2.8 6.5 L5 8.8 L10.5 3.3" stroke="#333" stroke-width="1.3" fill="none"/></svg>
<div style="left:339px;top:413px;width:474px;height:1px;background:#e3e3e3;"></div>
<div style="left:534px;top:414px;width:1px;height:19px;background:#e3e3e3;"></div>
<div class="t" style="left:370.8px;top:414.02px;font-size:11.5px;font-weight:normal;color:#000;letter-spacing:0.116px;">Ocultar rectángulo de foco</div>
<div style="left:537px;top:417px;width:13px;height:13px;background:#fff;box-sizing:border-box;border:1.5px solid #333;"></div>
<div style="left:339px;top:433px;width:474px;height:1px;background:#e3e3e3;"></div>
<div style="left:534px;top:434px;width:1px;height:19px;background:#e3e3e3;"></div>
<div class="t" style="left:370.8px;top:434.02px;font-size:11.5px;font-weight:normal;color:#000;letter-spacing:-0.194px;">Tabulable</div>
<div style="left:537px;top:437px;width:13px;height:13px;background:#fff;box-sizing:border-box;border:1.5px solid #333;"></div>
<svg style="position:absolute;left:537px;top:437px" width="13" height="13" viewBox="0 0 13 13"><path d="M2.8 6.5 L5 8.8 L10.5 3.3" stroke="#333" stroke-width="1.3" fill="none"/></svg>
<div style="left:339px;top:453px;width:474px;height:1px;background:#e3e3e3;"></div>
<div style="left:534px;top:454px;width:1px;height:19px;background:#e3e3e3;"></div>
<div class="t" style="left:370.8px;top:454.02px;font-size:11.5px;font-weight:normal;color:#000;letter-spacing:0.053px;">Filtro de entrada</div>
<svg style="position:absolute;left:776.5px;top:461px" width="11" height="7" viewBox="0 0 11 7"><path d="M1 1.2 L5 5.2 L9 1.2" stroke="#444" stroke-width="1.2" fill="none"/></svg>
<div style="left:793px;top:456px;width:18px;height:16px;background:#e1e1e1;box-sizing:border-box;border:1px solid #a0a0a0;"></div>
<div class="t" style="left:797px;top:454.69px;font-size:11px;font-weight:normal;color:#000;letter-spacing:0.3px;">...</div>
<div style="left:339px;top:473px;width:474px;height:1px;background:#e3e3e3;"></div>
<div style="left:534px;top:474px;width:1px;height:19px;background:#e3e3e3;"></div>
<div class="t" style="left:370.8px;top:474.02px;font-size:11.5px;font-weight:normal;color:#000;letter-spacing:0.03px;">Corrección ortográfica</div>
<div style="left:537px;top:477px;width:13px;height:13px;background:#fff;box-sizing:border-box;border:1.5px solid #333;"></div>
<div style="left:339px;top:493px;width:474px;height:1px;background:#e6e6e6;"></div>
<div style="left:339px;top:494px;width:474px;height:19px;background:#b4b4b4;"></div>
<svg style="position:absolute;left:344px;top:499px" width="8" height="10" viewBox="0 0 8 10"><path d="M1.5 1.2 L5.5 5 L1.5 8.8" stroke="#777" stroke-width="1.5" fill="none"/></svg>
<div class="t" style="left:357.8px;top:493.72px;font-size:11.5px;font-weight:bold;color:#000;letter-spacing:0.754px;">Mostrar</div>
<div style="left:339px;top:513px;width:474px;height:1px;background:#e6e6e6;"></div>
<div style="left:339px;top:514px;width:474px;height:19px;background:#b4b4b4;"></div>
<svg style="position:absolute;left:344px;top:519px" width="8" height="10" viewBox="0 0 8 10"><path d="M1.5 1.2 L5.5 5 L1.5 8.8" stroke="#777" stroke-width="1.5" fill="none"/></svg>
<div class="t" style="left:357.8px;top:513.72px;font-size:11.5px;font-weight:bold;color:#000;letter-spacing:0.48px;">Apariencia</div>
<div style="left:339px;top:533px;width:474px;height:1px;background:#e6e6e6;"></div>
<div style="left:339px;top:534px;width:474px;height:19px;background:#b4b4b4;"></div>
<svg style="position:absolute;left:344px;top:539px" width="8" height="10" viewBox="0 0 8 10"><path d="M1.5 1.2 L5.5 5 L1.5 8.8" stroke="#777" stroke-width="1.5" fill="none"/></svg>
<div class="t" style="left:357.8px;top:533.72px;font-size:11.5px;font-weight:bold;color:#000;letter-spacing:0.694px;">Fondo y borde</div>
<div style="left:339px;top:553px;width:474px;height:1px;background:#e6e6e6;"></div>
<div style="left:339px;top:554px;width:474px;height:19px;background:#b4b4b4;"></div>
<svg style="position:absolute;left:344px;top:559px" width="8" height="10" viewBox="0 0 8 10"><path d="M1.5 1.2 L5.5 5 L1.5 8.8" stroke="#777" stroke-width="1.5" fill="none"/></svg>
<div class="t" style="left:357.8px;top:553.72px;font-size:11.5px;font-weight:bold;color:#000;letter-spacing:0.397px;">Texto</div>
<div style="left:339px;top:573px;width:474px;height:1px;background:#e6e6e6;"></div>
<div style="left:339px;top:574px;width:474px;height:19px;background:#b4b4b4;"></div>
<svg style="position:absolute;left:344px;top:579px" width="8" height="10" viewBox="0 0 8 10"><path d="M1.5 1.2 L5.5 5 L1.5 8.8" stroke="#777" stroke-width="1.5" fill="none"/></svg>
<div class="t" style="left:357.8px;top:573.72px;font-size:11.5px;font-weight:bold;color:#000;letter-spacing:0.378px;">Ayuda</div>
<div style="left:339px;top:593px;width:474px;height:1px;background:#e6e6e6;"></div>
<div style="left:339px;top:594px;width:474px;height:19px;background:#b4b4b4;"></div>
<svg style="position:absolute;left:342px;top:600px" width="11" height="7" viewBox="0 0 11 7"><path d="M1.5 1.2 L5.5 5.2 L9.5 1.2" stroke="#333" stroke-width="1.8" fill="none"/></svg>
<div class="t" style="left:357.8px;top:593.72px;font-size:11.5px;font-weight:bold;color:#000;letter-spacing:0.23px;">Acción</div>
<div style="left:534px;top:614px;width:1px;height:19px;background:#e3e3e3;"></div>
<div class="t" style="left:370.8px;top:614.02px;font-size:11.5px;font-weight:normal;color:#000;letter-spacing:0.33px;">Método</div>
<div style="left:537px;top:616px;width:274px;height:16px;background:#e1e1e1;box-sizing:border-box;border:1px solid #a0a0a0;"></div>
<div class="t" style="left:653.5px;top:614.02px;font-size:11.5px;font-weight:normal;color:#000;letter-spacing:0.33px;">Método</div>
<div style="left:339px;top:633px;width:474px;height:1px;background:#e3e3e3;"></div>
<div style="left:534px;top:634px;width:1px;height:19px;background:#e3e3e3;"></div>
<div class="t" style="left:370.8px;top:634.02px;font-size:11.5px;font-weight:normal;color:#000;letter-spacing:-0.113px;">Arrastrable</div>
<div style="left:537px;top:637px;width:13px;height:13px;background:#fff;box-sizing:border-box;border:1.5px solid #333;"></div>
<div style="left:339px;top:653px;width:474px;height:1px;background:#e3e3e3;"></div>
<div style="left:534px;top:654px;width:1px;height:19px;background:#e3e3e3;"></div>
<div class="t" style="left:370.8px;top:654.02px;font-size:11.5px;font-weight:normal;color:#000;letter-spacing:-0.03px;">Arrastre automático</div>
<div style="left:537px;top:657px;width:13px;height:13px;background:#fff;box-sizing:border-box;border:1.5px solid #333;"></div>
<div style="left:339px;top:673px;width:474px;height:1px;background:#e3e3e3;"></div>
<div style="left:534px;top:674px;width:1px;height:19px;background:#e3e3e3;"></div>
<div class="t" style="left:370.8px;top:674.02px;font-size:11.5px;font-weight:normal;color:#000;letter-spacing:-0.01px;">Soltable</div>
<div style="left:537px;top:677px;width:13px;height:13px;background:#fff;box-sizing:border-box;border:1.5px solid #333;"></div>
<div style="left:339px;top:693px;width:474px;height:1px;background:#e3e3e3;"></div>
<div style="left:339px;top:695px;width:491px;height:1px;background:#a0a0a0;"></div>
<div class="t" style="left:340.8px;top:690.72px;font-size:11.5px;font-weight:normal;color:#000;letter-spacing:-0.099px;">Todos los temas</div>
</body></html>
